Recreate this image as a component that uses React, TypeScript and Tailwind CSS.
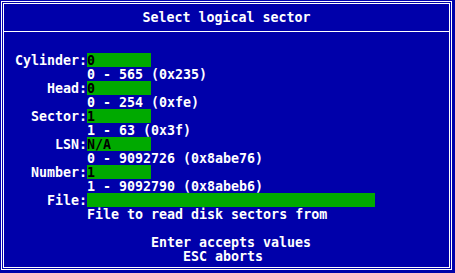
import React from "react";

function Line({ children, className = "" }: { children?: React.ReactNode; className?: string }) {
  return (
    <div className={"h-[14px] pt-px leading-[13px] whitespace-pre " + className}>{children}</div>
  );
}

function Field({ label, value, width = "w-[64px]" }: { label: string; value: string; width?: string }) {
  return (
    <div className="flex h-[14px]">
      <div className="w-[72px] pt-px text-right leading-[13px] whitespace-pre">{label}</div>
      <div className={"h-[14px] pt-px bg-[#00aa00] text-black leading-[13px] whitespace-pre " + width}>{value}</div>
    </div>
  );
}

function Range({ text }: { text: string }) {
  return (
    <div className="flex h-[14px]">
      <div className="w-[72px]" />
      <div className="pt-px leading-[13px] whitespace-pre">{text}</div>
    </div>
  );
}

export default function App() {
  return (
    <div
      className="w-[455px] h-[273px] bg-[#0000aa] pt-px pl-px text-white font-bold text-[13.3px]"
      style={{ fontFamily: '"DejaVu Sans Mono", "Liberation Mono", monospace' }}
    >
      <div className="w-[451px] h-[269px] border border-white p-px">
        <div className="h-full border border-white flex flex-col">
          <div className="h-[28px] border-b border-white pt-[6px]">
            <Line className="text-center">Select logical sector</Line>
          </div>
          <div className="pt-[21px] pl-[11px] flex flex-col">
            <Field label="Cylinder:" value="0" />
            <Range text="0 - 565 (0x235)" />
            <Field label="Head:" value="0" />
            <Range text="0 - 254 (0xfe)" />
            <Field label="Sector:" value="1" />
            <Range text="1 - 63 (0x3f)" />
            <Field label="LSN:" value="N/A" />
            <Range text="0 - 9092726 (0x8abe76)" />
            <Field label="Number:" value="1" />
            <Range text="1 - 9092790 (0x8abeb6)" />
            <Field label="File:" value="" width="w-[288px]" />
            <Range text="File to read disk sectors from" />
          </div>
          <div className="h-[14px]" />
          <Line className="pl-[147px]">Enter accepts values</Line>
          <Line className="pl-[179px]">ESC aborts</Line>
        </div>
      </div>
    </div>
  );
}
